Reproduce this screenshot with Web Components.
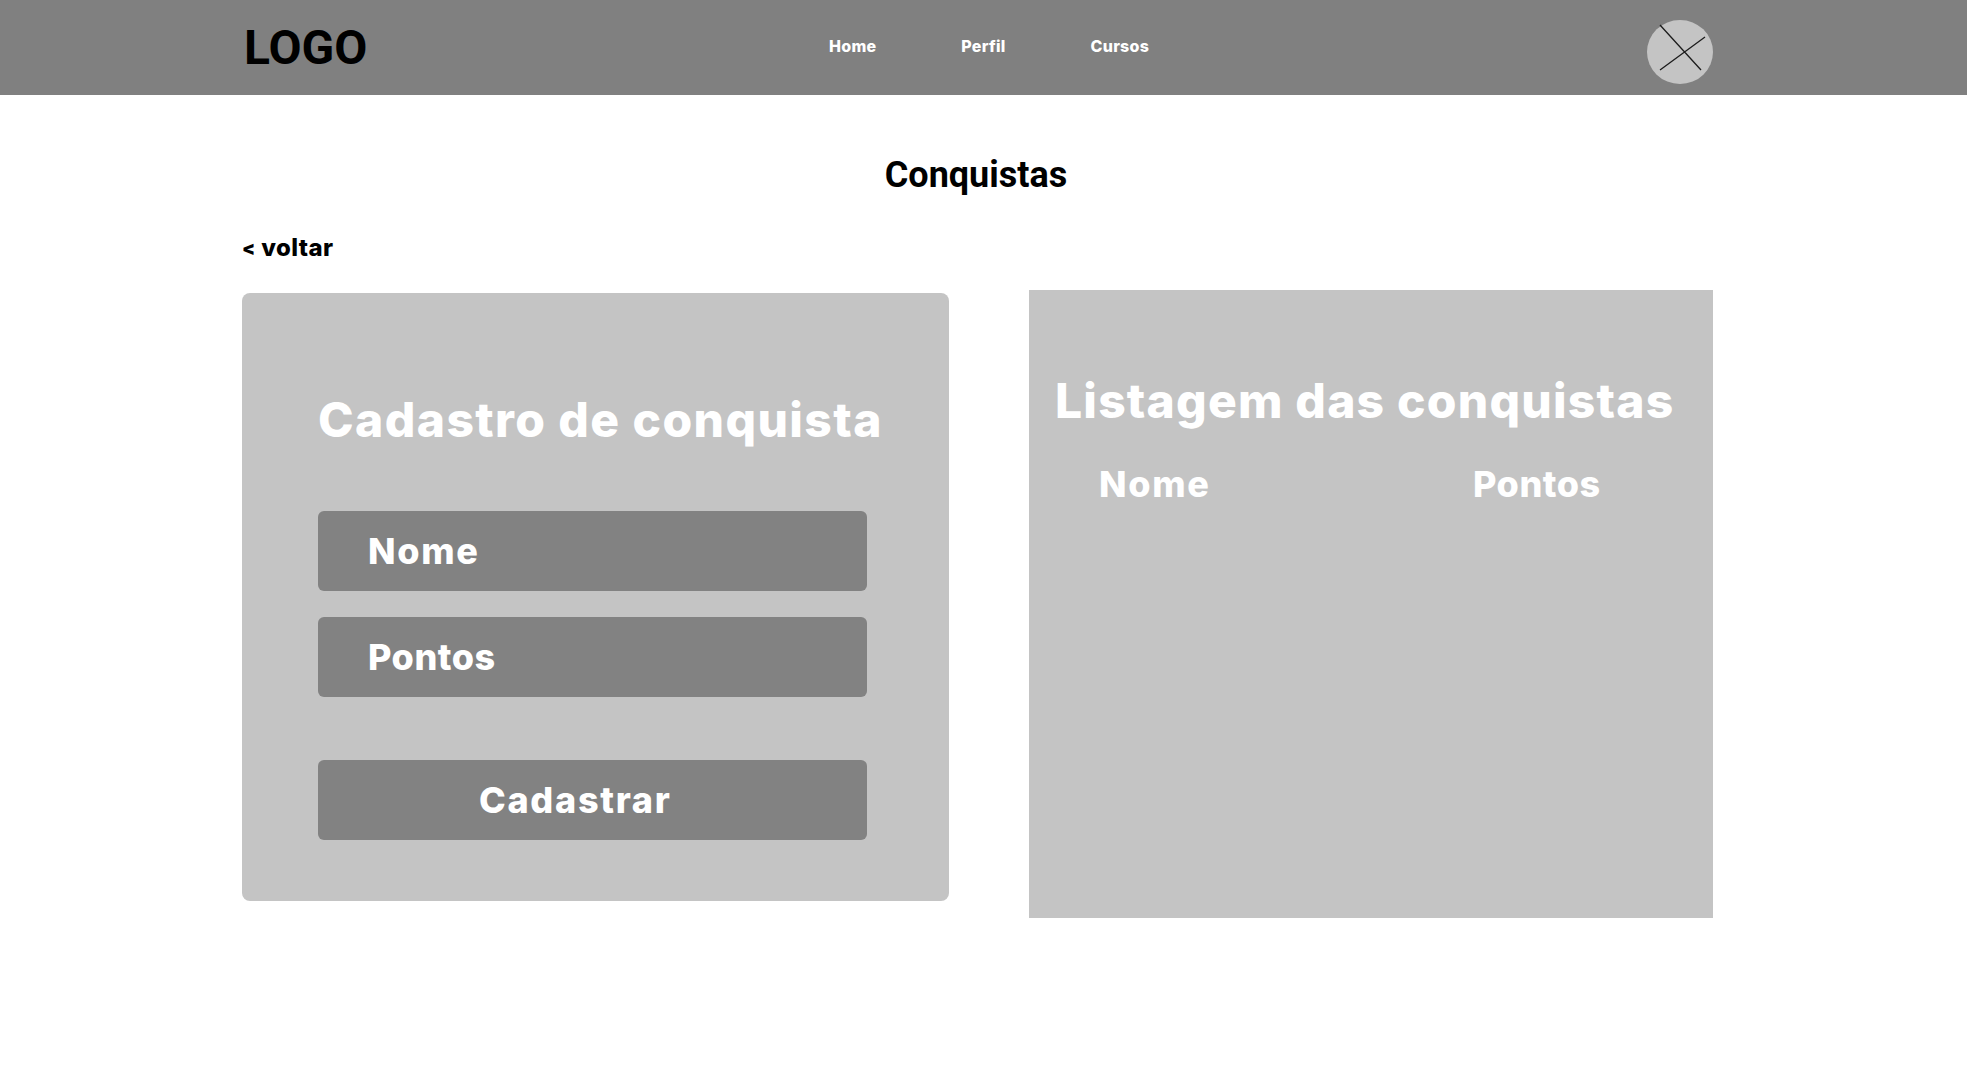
<!DOCTYPE html>
<html lang="pt">
<head>
<meta charset="utf-8">
<title>Conquistas</title>
<style>
  html, body { margin: 0; background: #fff; }
  body { font-family: "Inter", "Noto Sans", sans-serif; }
</style>
</head>
<body>
<top-bar>
  <a slot="nav">Home</a>
  <a slot="nav">Perfil</a>
  <a slot="nav">Cursos</a>
</top-bar>
<conquistas-page></conquistas-page>

<script>
class TopBar extends HTMLElement {
  constructor() {
    super();
    this.attachShadow({ mode: "open" });
    this.shadowRoot.innerHTML = /* html */`
    <style>
      :host {
        display: flex;
        align-items: center;
        height: 95px;
        padding: 0 254px 0 244px;
        background: #808080;
      }
      .logo {
        font: 700 48px/1 Roboto, sans-serif;
        color: #000;
        width: 585px;
      }
      nav {
        display: flex;
        gap: 85px;
        margin-top: -2px;
        font: 800 16px/1.2 Inter, sans-serif;
        letter-spacing: 0.25px;
        color: #fff;
      }
      svg {
        margin-left: auto;
        margin-top: 8px;
        flex: none;
      }
    </style>
    <div class="logo">LOGO</div>
    <nav><slot name="nav"></slot></nav>
    <svg width="66" height="64" viewBox="0 0 66 64">
      <ellipse cx="33" cy="32" rx="33" ry="32" fill="#c4c4c4"/>
      <path d="M13 5 L54 50 M13 50 L58 17" stroke="#1c1c1c" stroke-width="1.3" fill="none"/>
    </svg>`;
  }
}

class FieldBox extends HTMLElement {
  constructor() {
    super();
    this.attachShadow({ mode: "open" });
    this.shadowRoot.innerHTML = /* html */`
    <style>
      :host {
        display: flex;
        align-items: center;
        height: 80px;
        box-sizing: border-box;
        padding-left: 50px;
        border-radius: 6px;
        background: #828282;
        color: #fff;
        font: 800 36px/1 Inter, sans-serif;
        letter-spacing: 0.5px;
      }
      :host(.wide) {
        letter-spacing: 1.7px;
      }
      :host(.center) {
        padding-left: 161px;
      }
    </style>
    <slot></slot>`;
  }
}

class CadastroCard extends HTMLElement {
  constructor() {
    super();
    this.attachShadow({ mode: "open" });
    this.shadowRoot.innerHTML = /* html */`
    <style>
      :host {
        display: block;
        box-sizing: border-box;
        width: 707px;
        height: 608px;
        margin-top: 3px;
        padding: 97px 82px 0 76px;
        border-radius: 8px;
        background: #c4c4c4;
      }
      h2 {
        margin: 0 0 61px;
        font: 800 48px/60px Inter, sans-serif;
        letter-spacing: 1.4px;
        color: #fff;
        white-space: nowrap;
      }
      .fields {
        display: flex;
        flex-direction: column;
        gap: 26px;
      }
      field-box.center {
        margin-top: 37px;
      }
    </style>
    <h2>Cadastro de conquista</h2>
    <div class="fields">
      <field-box class="wide">Nome</field-box>
      <field-box>Pontos</field-box>
      <field-box class="center wide">Cadastrar</field-box>
    </div>`;
  }
}

class ListagemCard extends HTMLElement {
  constructor() {
    super();
    this.attachShadow({ mode: "open" });
    this.shadowRoot.innerHTML = /* html */`
    <style>
      :host {
        display: block;
        box-sizing: border-box;
        width: 684px;
        height: 628px;
        padding: 81px 0 0 26px;
        background: #c4c4c4;
        color: #fff;
      }
      h2 {
        margin: 0 0 32px;
        font: 800 48px/60px Inter, sans-serif;
        letter-spacing: 1.2px;
        white-space: nowrap;
      }
      .cols {
        display: flex;
        padding-left: 44px;
        font: 800 36px/1.2 Inter, sans-serif;
        letter-spacing: 0.5px;
      }
      .cols span:first-child {
        width: 374px;
        letter-spacing: 1.7px;
      }
    </style>
    <h2>Listagem das conquistas</h2>
    <div class="cols"><span>Nome</span><span>Pontos</span></div>`;
  }
}

class ConquistasPage extends HTMLElement {
  constructor() {
    super();
    this.attachShadow({ mode: "open" });
    this.shadowRoot.innerHTML = /* html */`
    <style>
      :host {
        display: block;
        padding: 56px 254px 0 242px;
      }
      h1 {
        margin: 0 0 34px;
        padding-right: 3px;
        font: 700 36px/48px Roboto, sans-serif;
        color: #000;
        text-align: center;
      }
      .back {
        height: 30px;
        margin-bottom: 27px;
        font: 800 24px/30px Inter, sans-serif;
        letter-spacing: 0.4px;
        color: #000;
      }
      .back span {
        font-size: 19px;
        font-weight: 900;
        vertical-align: 1px;
      }
      .row {
        display: flex;
        align-items: flex-start;
        justify-content: space-between;
      }
    </style>
    <h1>Conquistas</h1>
    <div class="back"><span>&lt;</span> voltar</div>
    <div class="row">
      <cadastro-card></cadastro-card>
      <listagem-card></listagem-card>
    </div>`;
  }
}

customElements.define("top-bar", TopBar);
customElements.define("field-box", FieldBox);
customElements.define("cadastro-card", CadastroCard);
customElements.define("listagem-card", ListagemCard);
customElements.define("conquistas-page", ConquistasPage);
</script>
</body>
</html>
